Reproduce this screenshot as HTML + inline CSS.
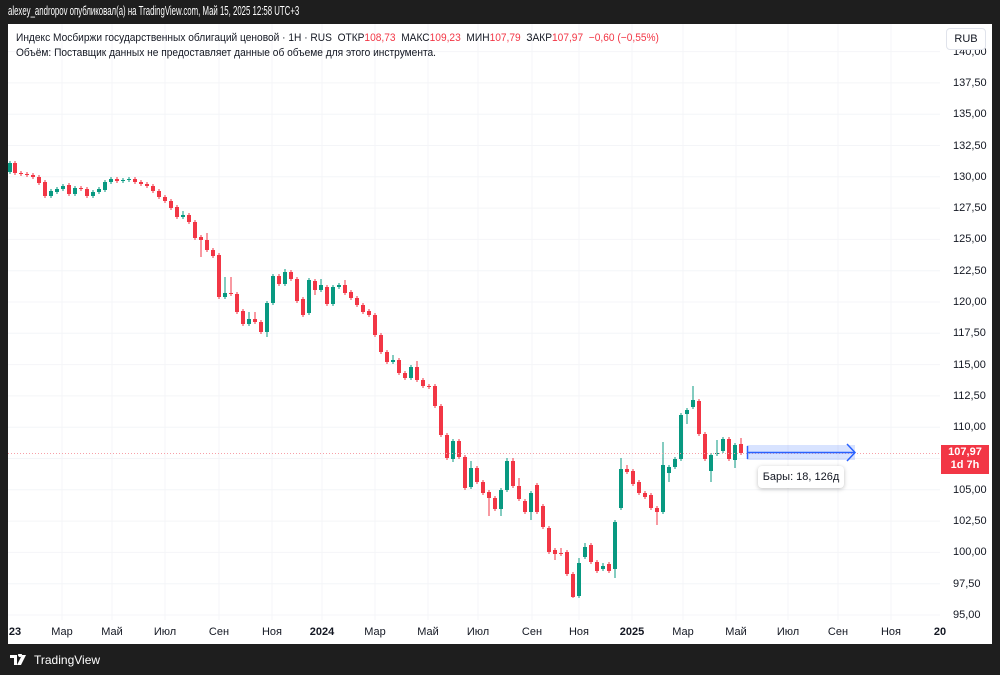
<!DOCTYPE html>
<html><head><meta charset="utf-8"><style>
body{margin:0;width:1000px;height:675px;background:#1e1e1e;overflow:hidden;font-family:"Liberation Sans",sans-serif;position:relative}
.top{position:absolute;left:8px;top:4px;color:#fff;font-size:12.5px;transform:scaleX(0.625);transform-origin:0 0;white-space:nowrap}
.panel{position:absolute;left:8px;top:24px;width:984px;height:620px;background:#fff}
.leg{position:absolute;left:16px;top:31px;font-size:11px;color:#131722;line-height:15px;transform:scaleX(0.925);transform-origin:0 0;white-space:nowrap}
.r{color:#f23645}
.rub{position:absolute;left:946px;top:28px;width:38px;height:20px;border:1px solid #e0e3eb;border-radius:4px;font-size:11px;text-align:center;line-height:20px;color:#131722;background:#fff}
.pl{position:absolute;left:953px;font-size:11px;color:#131722}
.tl{position:absolute;top:626px;font-size:11px;color:#131722;transform:translateX(-50%)}
.tag{position:absolute;left:941px;top:445px;width:48px;height:28px;background:#f23645;color:#fff;font-size:11px;font-weight:bold;text-align:center;line-height:13px;padding-top:1px}
.tip{position:absolute;left:758px;top:466px;width:86px;height:22px;background:#fff;border-radius:4px;box-shadow:0 1px 4px rgba(0,0,0,.25);font-size:11px;color:#131722;text-align:center;line-height:22px}
.logo{position:absolute;left:10px;top:653px;color:#fff;font-size:12px;display:flex;align-items:center;gap:4px}
</style></head><body>
<div class="top">alexey_andropov опубликовал(а) на TradingView.com, Май 15, 2025 12:58 UTC+3</div>
<div class="panel"></div>
<svg id="c" width="1000" height="675" style="position:absolute;left:0;top:0"></svg>
<div id="pls"></div>
<div class="leg">Индекс Мосбиржи государственных облигаций ценовой · 1H · RUS &nbsp;ОТКР<span class="r">108,73</span> &nbsp;МАКС<span class="r">109,23</span> &nbsp;МИН<span class="r">107,79</span> &nbsp;ЗАКР<span class="r">107,97</span> &nbsp;<span class="r">−0,60 (−0,55%)</span><br>Объём: Поставщик данных не предоставляет данные об объеме для этого инструмента.</div>
<div class="rub">RUB</div>
<div class="tl" style="left:15px;font-weight:bold">23</div>
<div class="tl" style="left:62px">Мар</div><div class="tl" style="left:112px">Май</div><div class="tl" style="left:165px">Июл</div><div class="tl" style="left:219px">Сен</div><div class="tl" style="left:272px">Ноя</div><div class="tl" style="left:322px;font-weight:bold">2024</div><div class="tl" style="left:375px">Мар</div><div class="tl" style="left:428px">Май</div><div class="tl" style="left:478px">Июл</div><div class="tl" style="left:532px">Сен</div><div class="tl" style="left:579px">Ноя</div><div class="tl" style="left:632px;font-weight:bold">2025</div><div class="tl" style="left:683px">Мар</div><div class="tl" style="left:736px">Май</div><div class="tl" style="left:788px">Июл</div><div class="tl" style="left:838px">Сен</div><div class="tl" style="left:891px">Ноя</div><div class="tl" style="left:940px;font-weight:bold">20</div>
<div class="tag">107,97<br>1d 7h</div>
<div class="tip">Бары: 18, 126д</div>
<div class="logo"><svg width="20" height="12" viewBox="0 0 20 12"><path d="M0 1h7v10H4V4H0z M8 1a2 2 0 1 1 0 .1z" fill="#fff"/><path d="M12 1h4l-5 10H7z" fill="#fff"/></svg>TradingView</div>
<script>
var s=document.getElementById('c'),h='';
var xs=[62,112,165,219,272,322,375,428,478,532,579,632,683,736,788,838,891];
xs.forEach(function(x){h+='<line x1="'+x+'" y1="24" x2="'+x+'" y2="620" stroke="#f4f5f8"/>';});
var pl='';
for(var i=0;i<19;i++){var p=95+i*2.5,y=615-i*31.3;
h+='<line x1="8" y1="'+y+'" x2="940" y2="'+y+'" stroke="#f4f5f8"/>';
pl+='<div class="pl" style="top:'+(y-6)+'px">'+p.toFixed(2).replace('.',',')+'</div>';}
document.getElementById('pls').innerHTML=pl;
var d=[[10,'g',163,172],[15,'r',163,173],[21,'r',173,174],[27,'r',174,175],[33,'r',175,177],[39,'r',177,183],[45,'r',182,196],[51,'g',191,196],[57,'g',189,192],[63,'g',186,189],[69,'r',185,194],[75,'g',188,194],[81,'r',188,189],[87,'r',189,196],[93,'g',192,196],[99,'g',189,192],[105,'g',182,190],[111,'g',179,182],[117,'r',179,181],[123,'g',180,181],[129,'g',179,180],[135,'r',179,182],[141,'r',182,184],[147,'r',184,186],[153,'r',186,191],[159,'r',191,197],[165,'r',197,201],[171,'r',201,208],[177,'r',207,217],[183,'g',215,217,211],[189,'r',215,222],[195,'r',222,238],[201,'r',237,240,0,257],[207,'r',240,250,233],[213,'r',250,256],[219,'r',255,297],[225,'g',293,297,277],[231,'r',293,294,277],[237,'r',294,312],[243,'r',311,324],[249,'g',319,324,312],[255,'r',319,322,312],[261,'r',322,332],[267,'g',303,332,0,337],[273,'g',276,303],[279,'r',276,284],[285,'g',272,284,269],[291,'r',272,279],[297,'r',279,301],[303,'r',299,315],[309,'g',280,313],[315,'r',281,290,0,295],[321,'g',285,290,279],[327,'r',287,304],[333,'g',287,304],[339,'g',285,287],[345,'r',285,293,280],[351,'r',292,298],[357,'r',298,305],[363,'r',305,312],[369,'r',311,315],[375,'r',315,335],[381,'r',335,352],[387,'r',352,362],[393,'g',360,362,355],[399,'r',360,373],[405,'r',373,378],[411,'g',367,378],[417,'r',367,380,361],[423,'r',380,386],[429,'r',386,387],[435,'r',386,406],[441,'r',406,435],[447,'r',435,458],[453,'g',441,459,0,462],[459,'r',441,457],[465,'r',457,488],[471,'g',468,487,461],[477,'r',468,482],[483,'r',482,493],[489,'r',492,498,0,516],[495,'r',498,509],[501,'g',490,509,0,516],[507,'g',461,490,458],[513,'r',461,486,458],[519,'r',486,499,478],[525,'r',501,512],[531,'g',493,512,0,520],[537,'r',485,512],[543,'r',506,527],[549,'r',528,552],[555,'r',550,554,0,560],[561,'r',553,554,548],[567,'r',552,574],[573,'r',574,597,0,598],[579,'g',563,596,558,598],[585,'g',547,557,543],[591,'r',545,562],[597,'r',562,571],[603,'g',566,569,563],[609,'r',564,571],[615,'g',522,569,0,578],[621,'g',469,508,458],[627,'r',469,472,465],[633,'r',471,484],[639,'r',482,493],[645,'r',493,497],[651,'r',495,508],[657,'r',508,512,0,525],[663,'g',465,512,442,514],[669,'g',467,473,0,482],[675,'g',459,467],[681,'g',415,459],[687,'g',410,414,0,424],[693,'g',400,407,386],[699,'r',401,434],[705,'r',434,459],[711,'g',455,471,0,482],[717,'g',453,454,440],[723,'g',439,451],[729,'r',439,459],[735,'g',445,460,0,468],[741,'r',444,453,438]];
d.forEach(function(c){var col=c[1]=='g'?'#089981':'#f23645';var hi=c[4]||c[2]-2,lo=c[5]||c[3]+2;
h+='<line x1="'+c[0]+'" y1="'+hi+'" x2="'+c[0]+'" y2="'+lo+'" stroke="'+col+'"/>';
h+='<rect x="'+(c[0]-2)+'" y="'+c[2]+'" width="4" height="'+Math.max(1,c[3]-c[2])+'" fill="'+col+'"/>';});
h+='<line x1="8" y1="453.5" x2="940" y2="453.5" stroke="#f7a0a8" stroke-dasharray="1 2" stroke-width="1"/>';
h+='<rect x="747" y="445" width="108" height="15" fill="#2962ff" fill-opacity="0.18"/>';
h+='<line x1="747" y1="452.5" x2="855" y2="452.5" stroke="#2962ff" stroke-width="1.5"/>';
h+='<line x1="747.5" y1="446" x2="747.5" y2="459" stroke="#2962ff" stroke-width="1.5"/>';
h+='<path d="M847 444L855 452.5L847 461" fill="none" stroke="#2962ff" stroke-width="1.5"/>';
s.innerHTML=h;
</script>
</body></html>
